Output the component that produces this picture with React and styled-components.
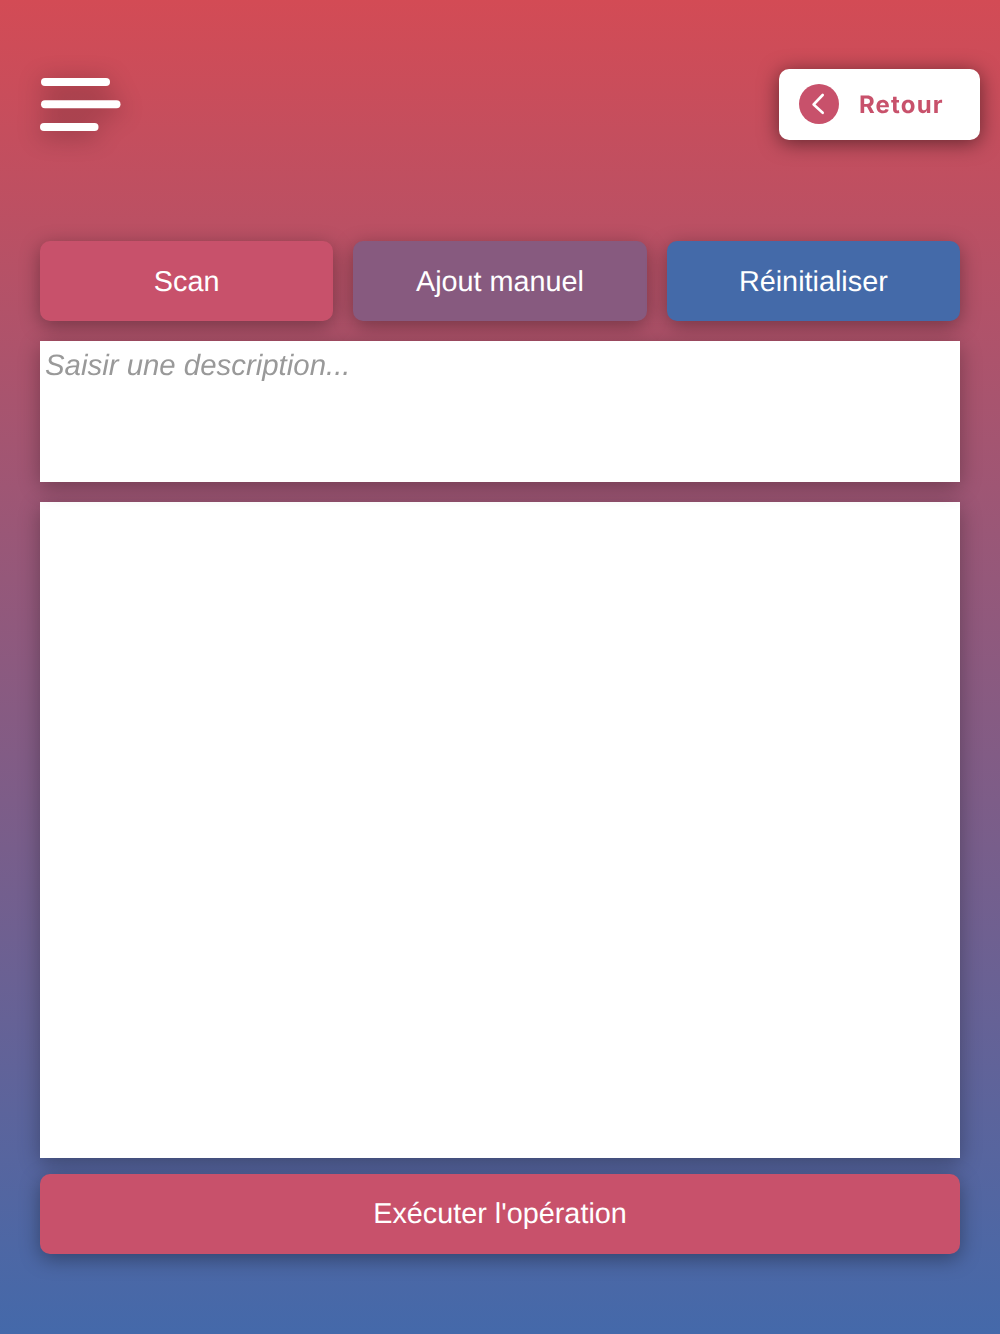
import React from "react";
import styled, { createGlobalStyle } from "styled-components";

const Global = createGlobalStyle`
  html, body { margin: 0; padding: 0; }
  body { font-family: "Liberation Sans", Arial, sans-serif; text-rendering: geometricPrecision; }
  * { box-sizing: border-box; }
`;

const Page = styled.div`
  width: 1000px;
  height: 1334px;
  overflow: hidden;
  background: linear-gradient(180deg, #d34b55 0%, #4469aa 100%);
  padding-top: 69px;
  display: flex;
  flex-direction: column;
`;

const Header = styled.header`
  height: 71px;
  padding: 0 20px 0 40px;
  display: flex;
  align-items: center;
  justify-content: space-between;
`;

const Burger = styled.svg`
  width: 82px;
  height: 56px;
  display: block;
  filter: drop-shadow(0 4px 12px rgba(0, 0, 0, 0.4));
  overflow: visible;
`;

const BackButton = styled.button`
  width: 201px;
  height: 71px;
  border: 0;
  border-radius: 10px;
  background: #fff;
  box-shadow: 0 3px 20px rgba(0, 0, 0, 0.5);
  padding: 0 0 0 20px;
  display: flex;
  align-items: center;
  gap: 20px;
  color: #c8516b;
  font-family: Inter, sans-serif;
  font-weight: 650;
  font-size: 24px;
  letter-spacing: 1.15px;
  text-rendering: geometricPrecision;
  will-change: transform;
`;

const BackCircle = styled.span`
  width: 40px;
  height: 40px;
  margin-bottom: 1px;
  border-radius: 50%;
  background: #c8516b;
  display: flex;
  align-items: center;
  justify-content: center;
`;

const Main = styled.main`
  padding: 101px 40px 0;
  display: flex;
  flex-direction: column;
`;

const Tabs = styled.div`
  display: grid;
  grid-template-columns: repeat(3, 1fr);
  gap: 20px;
`;

const ActionButton = styled.button`
  height: 80px;
  border: 0;
  border-radius: 10px;
  padding: 2px 0 0;
  background: ${(p) => p.$bg};
  color: #fff;
  font-family: "Liberation Sans", Arial, sans-serif;
  font-size: 28.8px;
  text-rendering: geometricPrecision;
  box-shadow: 0 5px 20px rgba(0, 0, 0, 0.35);
`;

const Description = styled.textarea`
  display: block;
  width: 100%;
  height: 140.5px;
  margin-top: 20px;
  padding: 7.5px 5px 5px;
  border: 0;
  border-radius: 0;
  outline: 0;
  resize: none;
  background: #fff;
  font-family: "Liberation Sans", Arial, sans-serif;
  font-size: 29.4px;
  text-rendering: geometricPrecision;
  box-shadow: 0 5px 20px rgba(0, 0, 0, 0.3);
  will-change: transform;

  &::placeholder {
    color: #999;
    font-style: italic;
    opacity: 1;
  }
`;

const ResultList = styled.div`
  height: 656px;
  margin-top: 20px;
  background: #fff;
  box-shadow: 0 5px 20px rgba(0, 0, 0, 0.3);
`;

const SubmitButton = styled(ActionButton)`
  display: block;
  width: 100%;
  margin-top: 16px;
`;

export default function App() {
  return (
    <Page>
      <Global />
      <Header>
        <Burger viewBox="0 0 82 56" aria-hidden="true">
          <g fill="#fff">
            <rect x="1" y="1" width="69" height="8" rx="4" />
            <rect x="1" y="23.3" width="79.5" height="8" rx="4" />
            <rect x="0" y="46" width="58.5" height="8" rx="4" />
          </g>
        </Burger>
        <BackButton>
          <BackCircle>
            <svg width="40" height="40" viewBox="0 0 40 40" fill="none" aria-hidden="true">
              <path d="M23.7 11 L14.6 20.5 L23.7 28.8" stroke="#fff" strokeWidth="2.6" strokeLinecap="round" strokeLinejoin="round" />
            </svg>
          </BackCircle>
          Retour
        </BackButton>
      </Header>
      <Main>
        <Tabs>
          <ActionButton $bg="#c8516b">Scan</ActionButton>
          <ActionButton $bg="#875a7f">Ajout manuel</ActionButton>
          <ActionButton $bg="#446aa9">Réinitialiser</ActionButton>
        </Tabs>
        <Description placeholder="Saisir une description..." />
        <ResultList />
        <SubmitButton $bg="#c8516b">Exécuter l'opération</SubmitButton>
      </Main>
    </Page>
  );
}
